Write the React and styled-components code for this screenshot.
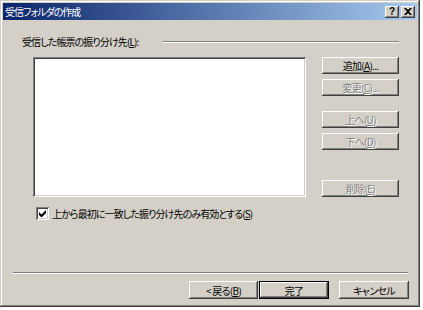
import React from "react";
import styled, { createGlobalStyle } from "styled-components";

const GlobalStyle = createGlobalStyle`
  html, body {
    margin: 0;
    padding: 0;
    background: #ffffff;
  }
  body {
    font-family: "Noto Sans CJK JP", "Liberation Sans", sans-serif;
    font-size: 10px;
    letter-spacing: -0.9px;
    font-feature-settings: "palt";
    color: #000000;
  }
`;

const Window = styled.div`
  box-sizing: border-box;
  width: 420px;
  height: 307px;
  padding: 3px;
  display: flex;
  flex-direction: column;
  background: #d4d0c8;
  box-shadow: inset -1px -1px #404040, inset 1px 1px #d4d0c8,
    inset -2px -2px #808080, inset 2px 2px #ffffff;
`;

const TitleBar = styled.div`
  height: 17px;
  display: flex;
  align-items: center;
  padding: 0 2px 0 2px;
  background: linear-gradient(to right, #0a246a, #a6caf0);
  color: #ffffff;
`;

const TitleText = styled.span`
  flex: 1;
  line-height: 17px;
  letter-spacing: -1px;
`;

const CaptionButton = styled.button`
  box-sizing: border-box;
  width: 14px;
  height: 12px;
  margin-left: ${(p) => (p.$gap ? "2px" : "0")};
  padding: 0;
  border: none;
  display: flex;
  align-items: center;
  justify-content: center;
  background: #d4d0c8;
  box-shadow: inset -1px -1px #404040, inset 1px 1px #ffffff,
    inset -2px -2px #808080;
  font-family: "Liberation Sans", sans-serif;
  font-weight: bold;
  font-size: 10px;
  letter-spacing: 0;
  line-height: 12px;
  color: #000000;
`;

const Body = styled.div`
  flex: 1;
  padding: 16px 18px 0 19px;
  display: flex;
  flex-direction: column;
`;

const GroupHeader = styled.div`
  height: 12px;
  display: flex;
  align-items: center;
`;

const GroupLabel = styled.span`
  line-height: 12px;
  white-space: nowrap;
`;

const Etched = styled.div`
  flex: 1;
  height: 0;
  margin-left: 25px;
  border-top: 1px solid #808080;
  border-bottom: 1px solid #ffffff;
`;

const MainRow = styled.div`
  display: flex;
  margin: 9px 0 0 11px;
`;

const ListBox = styled.div`
  width: 273px;
  height: 140px;
  background: #ffffff;
  box-shadow: inset 1px 1px #808080, inset -1px -1px #ffffff,
    inset 2px 2px #404040, inset -2px -2px #d4d0c8;
`;

const ButtonColumn = styled.div`
  margin-left: 16px;
  display: flex;
  flex-direction: column;
`;

const Button = styled.button`
  box-sizing: border-box;
  width: ${(p) => p.$width || 77}px;
  height: ${(p) => p.$height || 17}px;
  margin-top: ${(p) => p.$top || 0}px;
  margin-left: ${(p) => p.$left || 0}px;
  padding: 0;
  border: ${(p) => (p.$default ? "1px solid #000000" : "none")};
  background: #d4d0c8;
  box-shadow: inset -1px -1px #404040, inset 1px 1px #ffffff,
    inset -2px -2px #808080;
  font-family: inherit;
  font-size: 10px;
  letter-spacing: -0.7px;
  font-feature-settings: "palt";
  line-height: 13px;
  color: ${(p) => (p.disabled ? "#808080" : "#000000")};
  text-shadow: ${(p) => (p.disabled ? "1px 1px #ffffff" : "none")};
`;

const CheckRow = styled.label`
  display: flex;
  align-items: center;
  margin: 10px 0 0 14px;
  line-height: 13px;
`;

const CheckBox = styled.span`
  box-sizing: border-box;
  width: 13px;
  height: 13px;
  margin-right: 3px;
  display: flex;
  align-items: center;
  justify-content: center;
  background: #ffffff;
  box-shadow: inset 1px 1px #808080, inset -1px -1px #ffffff,
    inset 2px 2px #404040, inset -2px -2px #d4d0c8;
`;

const Separator = styled.div`
  height: 0;
  margin: 0 9px 0 10px;
  border-top: 1px solid #808080;
  border-bottom: 1px solid #ffffff;
`;

const Footer = styled.div`
  display: flex;
  justify-content: flex-end;
  padding: 7px 8px 5px 0;
`;

export default function App() {
  return (
    <>
      <GlobalStyle />
      <Window>
        <TitleBar>
          <TitleText>受信フォルダの作成</TitleText>
          <CaptionButton>?</CaptionButton>
          <CaptionButton $gap>
            <svg width="8" height="7" viewBox="0 0 8 7">
              <path
                d="M0 0h2l2 2 2-2h2L5 3.5 8 7H6L4 5 2 7H0l3-3.5z"
                fill="#000"
              />
            </svg>
          </CaptionButton>
        </TitleBar>
        <Body>
          <GroupHeader>
            <GroupLabel>
              受信した帳票の振り分け先(<u>L</u>):
            </GroupLabel>
            <Etched />
          </GroupHeader>
          <MainRow>
            <ListBox />
            <ButtonColumn>
              <Button>
                追加(<u>A</u>)...
              </Button>
              <Button $top={5} disabled>
                変更(<u>C</u>)...
              </Button>
              <Button $top={15} disabled>
                上へ(<u>U</u>)
              </Button>
              <Button $top={5} disabled>
                下へ(<u>D</u>)
              </Button>
              <Button $top={30} disabled>
                削除(<u>E</u>)
              </Button>
            </ButtonColumn>
          </MainRow>
          <CheckRow>
            <CheckBox>
              <svg width="7" height="7" viewBox="0 0 7 7">
                <path
                  d="M0 2v3l2 2h1l4-4V0L2.5 4.5z"
                  fill="#000"
                />
              </svg>
            </CheckBox>
            <span>
              上から最初に一致した振り分け先のみ有効とする(<u>S</u>)
            </span>
          </CheckRow>
        </Body>
        <Separator />
        <Footer>
          <Button $width={69} $height={18}>
            &lt;&nbsp;戻る(<u>B</u>)
          </Button>
          <Button $width={70} $height={18} $left={1} $default>
            完了
          </Button>
          <Button $width={70} $height={18} $left={10}>
            キャンセル
          </Button>
        </Footer>
      </Window>
    </>
  );
}
